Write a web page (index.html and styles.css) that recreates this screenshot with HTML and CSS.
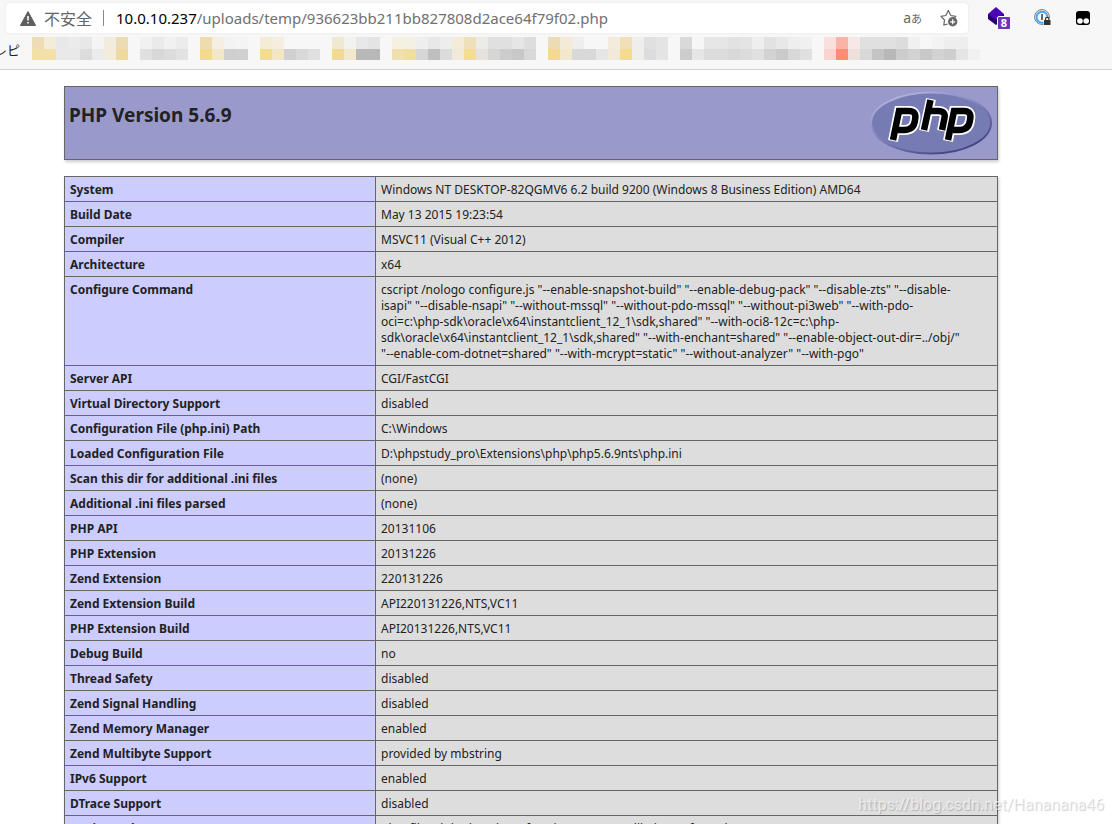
FILE: index.html
```html
<!DOCTYPE html>
<html lang="en">
<head>
<meta charset="utf-8">
<title>phpinfo()</title>
<link rel="stylesheet" href="styles.css">
</head>
<body>
<header class="chrome">
  <div class="toolbar">
    <form class="address">
      <button class="security" type="button">
        <svg width="16" height="15" viewBox="0 0 16 15"><path d="M8 .5 15.6 14.5H.4Z" fill="#5f5f5f" stroke="#5f5f5f" stroke-linejoin="round"/><path d="M8 5v4.500M8 11v1.600" stroke="#fff" stroke-width="1.600"/></svg>
        <span>不安全</span>
      </button>
      <span class="divider"></span>
      <div class="url" role="textbox" aria-label="Address" contenteditable="true" spellcheck="false"><b>10.0.10.237</b>/uploads/temp/936623bb211bb827808d2ace64f79f02.php</div>
      <button class="translate" type="button" aria-label="Translate">a<small>あ</small></button>
      <button class="icon" type="button" aria-label="Add to favorites">
        <svg width="18" height="18" viewBox="0 0 18 18" fill="none"><path d="M7.500 15.200 3.800 16l.7-5L1 7.300l4.800-.8L8.300 1.500l2.500 5 5 .8-1.300 1.500" stroke="#666" stroke-width="1.200" stroke-linejoin="round"/><circle cx="12.700" cy="12.800" r="4.700" fill="#666"/><path d="M12.700 10.300v5M10.200 12.800h5" stroke="#fff" stroke-width="1.200"/></svg>
      </button>
    </form>
    <nav class="extensions">
      <button class="icon" type="button" aria-label="Extension with 8 items">
        <svg width="24" height="26" viewBox="0 0 24 26"><path d="M1 9v5l8 6 8-6V9Z" fill="#26006d"/><path d="m9 2 8 7-8 6-8-6Z" fill="#4b05b4"/><rect x="10.500" y="11.500" width="13" height="13" rx="1.500" fill="#6b36bd" stroke="#f7f7f7"/><text class="badge" x="17" y="22" text-anchor="middle">8</text></svg>
      </button>
      <button class="icon" type="button" aria-label="Password manager">
        <svg width="18" height="18" viewBox="0 0 18 18" fill="none"><circle cx="8" cy="8" r="7.400" stroke="#777"/><path d="M11.500 12.500A5.500 5.500 0 1 1 13.500 8" stroke="#4aa5f5" stroke-width="2"/><path d="M8 5v6" stroke="#444" stroke-width="1.600"/><path d="M9.500 9h8v8h-8Z" fill="#f7f7f7"/><rect x="10" y="11" width="6.500" height="5" rx=".5" fill="#333"/><path d="M11.500 11.500V10a1.700 1.700 0 0 1 3.400 0v1.500" stroke="#333" stroke-width="1.200"/></svg>
      </button>
      <button class="icon" type="button" aria-label="Script manager">
        <svg width="16" height="16" viewBox="0 0 16 16"><rect x="1" y="1" width="14" height="14" rx="3" fill="#000"/><circle cx="5" cy="11" r="2.800" fill="#fff"/><circle cx="11.200" cy="11" r="2.800" fill="#fff"/></svg>
      </button>
    </nav>
  </div>
  <div class="bookmarks">
    <span class="bookmark-end">レピ</span>
    <svg id="mosaic" width="960" height="26" viewBox="20 36 960 26" shape-rendering="crispEdges" aria-hidden="true"></svg>
  </div>
</header>
<main class="page">
  <section class="banner">
    <h1>PHP Version 5.6.9</h1>
    <svg width="124" height="67" viewBox="0 0 124 67" role="img" aria-label="php">
      <defs><linearGradient id="rim" x1="0" y1="0" x2=".7" y2="1"><stop offset="0" stop-color="#c0c0e2"/><stop offset=".45" stop-color="#8d8fc5"/><stop offset="1" stop-color="#434480"/></linearGradient></defs>
      <ellipse cx="62" cy="33" rx="60" ry="30.500" fill="#777bb4" stroke="url(#rim)" stroke-width="2"/>
      <g fill="none" transform="translate(2 -1)">
        <path d="M22 52 28 22h10q8 0 6 9-1 10-11 10h-6M53 42l7-32M58 22h9q8 0 6.500 7L71 42M77 52l6-30h10q8 0 6 9-1 10-11 10h-6" stroke="#fff" stroke-width="10"/>
        <path d="M22 51 28 22h10q8 0 6 9-1 10-11 10h-6M53 41l6.500-30M58 22h9q8 0 6.500 7L71 41M77 51l6-29h10q8 0 6 9-1 10-11 10h-6" stroke="#000" stroke-width="6.500"/>
      </g>
    </svg>
  </section>
  <table class="info">
    <tbody>
      <tr><th scope="row">System</th><td>Windows NT DESKTOP-82QGMV6 6.2 build 9200 (Windows 8 Business Edition) AMD64</td></tr>
      <tr><th scope="row">Build Date</th><td>May 13 2015 19:23:54</td></tr>
      <tr><th scope="row">Compiler</th><td>MSVC11 (Visual C++ 2012)</td></tr>
      <tr><th scope="row">Architecture</th><td>x64</td></tr>
      <tr><th scope="row">Configure Command</th><td>cscript /nologo configure.js "--enable-snapshot-build" "--enable-debug-pack" "--disable-zts" "--disable-<br>isapi" "--disable-nsapi" "--without-mssql" "--without-pdo-mssql" "--without-pi3web" "--with-pdo-<br>oci=c:\php-sdk\oracle\x64\instantclient_12_1\sdk,shared" "--with-oci8-12c=c:\php-<br>sdk\oracle\x64\instantclient_12_1\sdk,shared" "--with-enchant=shared" "--enable-object-out-dir=../obj/"<br>"--enable-com-dotnet=shared" "--with-mcrypt=static" "--without-analyzer" "--with-pgo"</td></tr>
      <tr><th scope="row">Server API</th><td>CGI/FastCGI</td></tr>
      <tr><th scope="row">Virtual Directory Support</th><td>disabled</td></tr>
      <tr><th scope="row">Configuration File (php.ini) Path</th><td>C:\Windows</td></tr>
      <tr><th scope="row">Loaded Configuration File</th><td>D:\phpstudy_pro\Extensions\php\php5.6.9nts\php.ini</td></tr>
      <tr><th scope="row">Scan this dir for additional .ini files</th><td>(none)</td></tr>
      <tr><th scope="row">Additional .ini files parsed</th><td>(none)</td></tr>
      <tr><th scope="row">PHP API</th><td>20131106</td></tr>
      <tr><th scope="row">PHP Extension</th><td>20131226</td></tr>
      <tr><th scope="row">Zend Extension</th><td>220131226</td></tr>
      <tr><th scope="row">Zend Extension Build</th><td>API220131226,NTS,VC11</td></tr>
      <tr><th scope="row">PHP Extension Build</th><td>API20131226,NTS,VC11</td></tr>
      <tr><th scope="row">Debug Build</th><td>no</td></tr>
      <tr><th scope="row">Thread Safety</th><td>disabled</td></tr>
      <tr><th scope="row">Zend Signal Handling</th><td>disabled</td></tr>
      <tr><th scope="row">Zend Memory Manager</th><td>enabled</td></tr>
      <tr><th scope="row">Zend Multibyte Support</th><td>provided by mbstring</td></tr>
      <tr><th scope="row">IPv6 Support</th><td>enabled</td></tr>
      <tr><th scope="row">DTrace Support</th><td>disabled</td></tr>
      <tr><th scope="row">Registered PHP Streams</th><td>php, file, glob, data, http, ftp, zip, compress.zlib, https, ftps, phar</td></tr>
    </tbody>
  </table>
</main>
<div class="watermark">https://blog.csdn.net/Hananana46</div>
<script src="mosaic.js"></script>
</body>
</html>
```
FILE: styles.css
```css
* { box-sizing: border-box; }
body {
  margin: 0;
  height: 100vh;
  display: flex;
  flex-direction: column;
  overflow: hidden;
  position: relative;
  background: #fff;
  color: #222;
  font-family: "Noto Sans", "Noto Sans CJK SC", sans-serif;
}
button { border: 0; padding: 0; background: none; font: inherit; color: inherit; }
svg { display: block; }
.chrome { flex: none; background: #f7f7f7; border-bottom: 1px solid #d0d0d0; }
.toolbar { display: flex; align-items: center; gap: 19px; padding: 3px 21px 3px 6px; }
.address {
  flex: 1;
  display: flex;
  align-items: center;
  height: 30px;
  padding: 0 10px 0 14px;
  border-radius: 4px;
  background: #fff;
  box-shadow: 0 0 3px #e4e4e4;
}
.security { display: flex; align-items: center; gap: 8px; font: 16px/24px "Noto Sans CJK SC", sans-serif; color: #666; }
.divider { width: 1px; height: 16px; margin: 0 12px 0 11px; background: #888; }
.url { flex: 1; font-size: 15px; line-height: 24px; color: #707070; white-space: nowrap; }
.url b { font-weight: 400; color: #000; }
.translate { margin-right: 18px; font-size: 14px; line-height: 20px; color: #666; }
.translate small { font-size: 11px; }
.extensions { display: flex; align-items: center; gap: 23px; }
.badge { font: 700 11px "Noto Sans", sans-serif; fill: #fff; }
.bookmarks { display: flex; height: 33px; }
.bookmark-end { width: 20px; height: 24px; overflow: hidden; direction: rtl; font-size: 13px; line-height: 28px; white-space: nowrap; }
.page { flex: 1; min-height: 0; overflow: hidden; padding: 16px 114px 0 64px; }
.banner {
  display: flex;
  justify-content: space-between;
  height: 74px;
  margin-bottom: 16px;
  padding: 3px 4px;
  border: 1px solid #666;
  background: #99c;
  box-shadow: 1px 2px 3px #ccc;
}
.banner h1 { margin: 12px 0 0; font-size: 19px; line-height: 26px; }
.info { width: 100%; border-collapse: collapse; font-size: 12px; line-height: 16px; box-shadow: 1px 2px 3px #ccc; }
.info th, .info td { padding: 5px 5px 3px; border: 1px solid #666; text-align: left; vertical-align: top; }
.info th { width: 311px; background: #ccf; }
.info td { background: #ddd; }
.watermark {
  position: absolute;
  right: 8px;
  bottom: 8px;
  font: 16px/22px Roboto, sans-serif;
  color: rgba(255, 255, 255, .6);
  text-shadow: 1px 1px 1px rgba(0, 0, 0, .2);
}
```
FILE: mosaic.js
```js
// Blurred bookmark tiles: [x, top-row colours, bottom-row colours], 12px cells.
const runs = [
  [32, "eddcb4 f2ecd8 e8e8ea ebebeb e8e8e8 f4f4f4 f2ecdc ecdcb4 f7f7f7 f1f1f1 eaeaea f1f1f1 ececec",
       "f2e0a8 f2e0a8 e9e9e9 e9e9e9 dcdcdc ebebeb f3ecdc eed9a0 f7f7f7 e0e0e0 d8d8d8 dcdcdc e2e2e2"],
  [200, "ecdcb0 f4efe2 f3f3f3 f4f4f4", "f3da8c f2e8c8 cfcfcf d0d0d0"],
  [260, "f4ecd4 f4eee0 f7f7f7 f7f7f7 f7f7f7", "f4dc90 f2e6c4 d0d0d0 d8d8d8 e0e0e0"],
  [332, "f0e8d0 f2f2ee e8e8e8 e4e4e4", "f3da94 f2e8cc b8b8b8 b8b8b8"],
  [392, "f5f0e0 f4f0e4 eeeeee e8e8e8 ededed f3ecd8 f0e0b8 ecebe8 e0e0e0 e0e0e0 e6e6e6 dddddd",
        "f0e0b0 f0dfa0 d6d6d6 bfbfbf dcdcdc f2ead8 f5dd90 e6e2dc d6d6d6 cccccc c8c8c8 d8d8d8"],
  [548, "ecdcb4 f3ead8 eeeeee f7f7f7 f7f7f7 f3ecdc f0e0b8 f0eeec e0e0e0 e4e4e4",
        "f3da90 f2e8cc d8d8d8 d8d8d8 e6e6e6 f2ead8 f5dc8c f0eeea dcdcdc e4e4e4"],
  [680, "d9d9d9 f6f6f6 e6e6e6 e6e6e6 e2e2e2 e4e4e4 eeeeee e2e2e2 e8e8e8 eeeeee f0f0f0",
        "cccccc e6e6e6 dcdcdc dcdcdc d8d8d8 dcdcdc e0e0e0 d2d2d2 cacaca d8d8d8 e0e0e0"],
  [824, "f8e0dc f9b4a6 f5e8e6 e0e0e0 e0e0e0 e0e0e0 dcdcdc f0f0f0 f7f7f7 f3f3f3 eeeeee eeeeee f7f7f7",
        "f8d4cc fc8c74 ecdfdc d8d8d8 c4c4c4 b8b8b8 cccccc d2d2d2 c8c8c8 d2d2d2 cecece e4e4e4 f1f1f1"]
];
const mosaic = document.getElementById("mosaic");
function tile(x, y, height, fill) {
  const rect = document.createElementNS("http://www.w3.org/2000/svg", "rect");
  Object.entries({ x, y, width: 12, height, fill }).forEach(([k, v]) => rect.setAttribute(k, v));
  mosaic.append(rect);
}
runs.forEach(([x, top, bottom]) => {
  top.split(" ").forEach((c, i) => tile(x + i * 12, 37, 12, "#" + c));
  bottom.split(" ").forEach((c, i) => tile(x + i * 12, 49, 11, "#" + c));
});
```
